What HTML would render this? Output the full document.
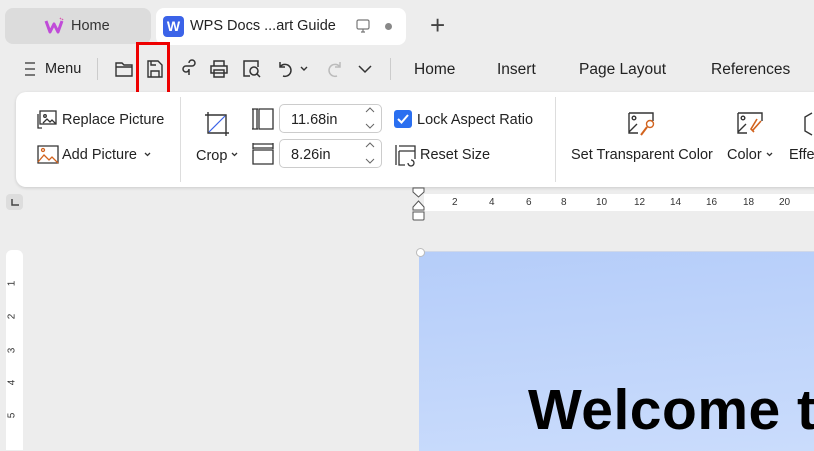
<!DOCTYPE html>
<html><head><meta charset="utf-8"><style>
*{margin:0;padding:0;box-sizing:border-box}
body{width:814px;height:446px;overflow:hidden;background:#ededed;font-family:"Liberation Sans",sans-serif;color:#222;position:relative}
.a{position:absolute;white-space:nowrap}
.t15{font-size:14.5px}
svg{position:absolute;overflow:visible}
</style></head><body>
<!-- tabs -->
<div class="a" style="left:5px;top:8px;width:146px;height:36px;background:#dcdcdc;border-radius:8px"></div>
<svg style="left:44px;top:17px" width="20" height="18" viewBox="0 0 20 18"><path d="M2 4 L6 15 L10 7 L14 15 L18 4" fill="none" stroke="#c04bd8" stroke-width="3" stroke-linejoin="round"/><path d="M16 1 l1 1 M18 3 l1 -1" stroke="#d85bb0" stroke-width="1.5"/></svg>
<div class="a t15" style="left:71px;top:18px;color:#333">Home</div>
<div class="a" style="left:156px;top:8px;width:250px;height:37px;background:#fff;border-radius:8px"></div>
<div class="a" style="left:163px;top:16px;width:21px;height:21px;background:#3b63e8;border-radius:4px;color:#fff;font-weight:bold;font-size:14px;text-align:center;line-height:21px">W</div>
<div class="a t15" style="left:190px;top:18px;color:#222">WPS Docs ...art Guide</div>
<svg style="left:356px;top:19px" width="14" height="14"><rect x="1" y="1" width="12" height="9" rx="1.5" fill="none" stroke="#777" stroke-width="1.2"/><path d="M5 13h4M7 10v3" stroke="#777" stroke-width="1.2"/></svg>
<div class="a" style="left:385px;top:23px;width:7px;height:7px;border-radius:50%;background:#888"></div>
<div class="a" style="left:430px;top:10px;font-size:26px;color:#444;font-weight:300">+</div>
<!-- toolbar -->
<svg style="left:24px;top:62px" width="12" height="14"><path d="M1 1h10M1 7h10M1 13h10" stroke="#333" stroke-width="1.3"/></svg>
<div class="a t15" style="left:45px;top:61px;color:#222">Menu</div>
<div class="a" style="left:97px;top:58px;width:1px;height:22px;background:#ccc"></div>
<svg style="left:114px;top:59px" width="20" height="20" fill="none" stroke="#333" stroke-width="1.4"><path d="M2 4h6l2 2h8v11H2z M2 8h16"/></svg>
<svg style="left:146px;top:59px" width="18" height="20" fill="none" stroke="#333" stroke-width="1.4"><path d="M2 2h10l4 4v12H2z M5 18v-6h8v6 M5 2v4h5"/></svg>
<div class="a" style="left:136px;top:42px;width:34px;height:55px;border:3.5px solid #ee0000"></div>
<svg style="left:180px;top:60px" width="18" height="18" fill="none" stroke="#333" stroke-width="1.5"><path d="M9 3a3 3 0 1 1 3 3h-6a3 3 0 1 0 3 3v6"/></svg>
<svg style="left:209px;top:59px" width="20" height="20" fill="none" stroke="#333" stroke-width="1.5"><path d="M5 7V2h10v5 M2 7h16v7H2z M5 11h10v7H5z"/></svg>
<svg style="left:242px;top:59px" width="20" height="20" fill="none" stroke="#333" stroke-width="1.5"><path d="M8 17H2V2h14v6"/><circle cx="12" cy="12" r="4"/><path d="M15 15l3 3"/></svg>
<svg style="left:277px;top:60px" width="18" height="18" fill="none" stroke="#333" stroke-width="1.5"><path d="M3 2v5h5 M3 7a6 6 0 1 1 3 9"/></svg>
<svg style="left:300px;top:66px" width="8" height="6" fill="none" stroke="#333" stroke-width="1.4"><path d="M1 1l3 3 3-3"/></svg>
<svg style="left:325px;top:60px" width="18" height="18" fill="none" stroke="#bbb" stroke-width="1.5"><path d="M15 2v5h-5 M15 7a6 6 0 1 0 -3 9"/></svg>
<svg style="left:358px;top:65px" width="14" height="9" fill="none" stroke="#333" stroke-width="1.5"><path d="M1 1l6 6 6-6"/></svg>
<div class="a" style="left:390px;top:58px;width:1px;height:22px;background:#ccc"></div>
<div class="a" style="left:414px;top:61px;font-size:15.5px">Home</div>
<div class="a" style="left:497px;top:61px;font-size:15.5px">Insert</div>
<div class="a" style="left:579px;top:61px;font-size:15.5px">Page Layout</div>
<div class="a" style="left:711px;top:61px;font-size:15.5px">References</div>
<!-- ribbon -->
<div class="a" style="left:16px;top:92px;width:830px;height:95px;background:#fff;border-radius:10px;box-shadow:0 1px 3px rgba(0,0,0,.15)"></div>
<svg style="left:37px;top:110px" width="22" height="20" fill="none" stroke="#333" stroke-width="1.3"><rect x="3" y="1" width="16" height="13"/><path d="M1 4v14h4 M6 13l4-4 3 3 2-2 4 4"/><circle cx="8" cy="6" r="1.3"/></svg>
<div class="a t15" style="left:62px;top:112px">Replace Picture</div>
<svg style="left:37px;top:145px" width="22" height="20" fill="none" stroke-width="1.3"><path d="M1 1h20v17H1z" stroke="#333"/><path d="M1 17l6-7 5 5 3-3 6 6" stroke="#d2631e"/><circle cx="6" cy="5" r="1.5" stroke="#d2631e"/></svg>
<div class="a t15" style="left:62px;top:147px">Add Picture</div>
<svg style="left:144px;top:152px" width="7" height="5" fill="none" stroke="#333" stroke-width="1.3"><path d="M1 1l2.5 2.5L6 1"/></svg>
<div class="a" style="left:180px;top:97px;width:1px;height:85px;background:#ddd"></div>
<svg style="left:204px;top:111px" width="28" height="28" fill="none" stroke="#333" stroke-width="1.4"><path d="M1 4h21v21 M4 1v21h21"/><path d="M5 21L21 5" stroke="#3b63e8" stroke-width="1.2"/></svg>
<div class="a t15" style="left:196px;top:148px">Crop</div>
<svg style="left:231px;top:152px" width="7" height="5" fill="none" stroke="#333" stroke-width="1.3"><path d="M1 1l2.5 2.5L6 1"/></svg>
<svg style="left:252px;top:108px" width="22" height="22" fill="none" stroke="#333" stroke-width="1.3"><path d="M1 1v20 M5 1v20 M7 1h14v20H7z"/><path d="M0 1h6M0 21h6"/></svg>
<svg style="left:252px;top:143px" width="22" height="22" fill="none" stroke="#333" stroke-width="1.3"><path d="M1 1h20 M1 5h20 M1 7h20v14H1z M1 0v6M21 0v6"/></svg>
<div class="a" style="left:279px;top:104px;width:103px;height:29px;border:1px solid #ccc;border-radius:5px"></div>
<div class="a t15" style="left:291px;top:112px">11.68in</div>
<div class="a" style="left:279px;top:139px;width:103px;height:29px;border:1px solid #ccc;border-radius:5px"></div>
<div class="a t15" style="left:291px;top:147px">8.26in</div>
<svg style="left:365px;top:107px" width="10" height="23" fill="none" stroke="#666" stroke-width="1"><path d="M1 5l4-4 4 4 M1 17l4 4 4-4"/></svg>
<svg style="left:365px;top:142px" width="10" height="23" fill="none" stroke="#666" stroke-width="1"><path d="M1 5l4-4 4 4 M1 17l4 4 4-4"/></svg>
<div class="a" style="left:394px;top:110px;width:18px;height:18px;background:#2a6ff0;border-radius:3px"></div>
<svg style="left:397px;top:114px" width="12" height="10" fill="none" stroke="#fff" stroke-width="2"><path d="M1 5l3.5 3.5L11 1"/></svg>
<div class="a t15" style="left:417px;top:112px">Lock Aspect Ratio</div>
<svg style="left:395px;top:144px" width="22" height="22" fill="none" stroke="#333" stroke-width="1.3"><path d="M1 1v20 M4 2h16v13 M4 7h16 M4 7v14h6 M13 19a3 3 0 1 0 3 -3"/></svg>
<div class="a t15" style="left:420px;top:147px">Reset Size</div>
<div class="a" style="left:555px;top:97px;width:1px;height:85px;background:#ddd"></div>
<svg style="left:628px;top:112px" width="28" height="24" fill="none" stroke-width="1.4"><path d="M1 1h24v8 M1 1v20h9 M1 20l8-8" stroke="#333"/><circle cx="6" cy="6" r="1.8" stroke="#333"/><circle cx="22" cy="12" r="3.5" stroke="#d2631e"/><path d="M19 15l-6 8" stroke="#d2631e" stroke-width="2"/></svg>
<div class="a t15" style="left:571px;top:147px">Set Transparent Color</div>
<svg style="left:737px;top:112px" width="28" height="24" fill="none" stroke-width="1.4"><path d="M1 1h24v8 M1 1v20h9 M1 20l8-8" stroke="#333"/><circle cx="6" cy="6" r="1.8" stroke="#333"/><path d="M24 9l-8 9 M20 7l-6 10 3 3" stroke="#d2631e" stroke-width="1.6"/></svg>
<div class="a t15" style="left:727px;top:147px">Color</div>
<svg style="left:766px;top:152px" width="7" height="5" fill="none" stroke="#333" stroke-width="1.3"><path d="M1 1l2.5 2.5L6 1"/></svg>
<svg style="left:804px;top:112px" width="14" height="24" fill="none" stroke="#333" stroke-width="1.4"><path d="M8 1L1 5v14l7 4"/></svg>
<div class="a t15" style="left:789px;top:147px">Effe</div>
<!-- rulers -->
<div class="a" style="left:6px;top:194px;width:17px;height:16px;background:#ddd;border-radius:4px"></div>
<svg style="left:11px;top:199px" width="8" height="7" fill="none" stroke="#444" stroke-width="1.5"><path d="M1 0v6h7"/></svg>
<div class="a" style="left:424px;top:194px;width:390px;height:17px;background:#fff"></div>
<svg style="left:412px;top:187px" width="14" height="36" fill="#fff" stroke="#555" stroke-width="1"><path d="M1 1h11v4l-5.5 5L1 5z M1 20l5.5-6 5.5 6v3H1z M1 25h11v7a1 1 0 0 1-1 1H2a1 1 0 0 1-1-1z"/></svg>
<div class="a" style="left:0;top:197px;font-size:10px;color:#333">
<span class="a" style="left:452px">2</span><span class="a" style="left:489px">4</span><span class="a" style="left:526px">6</span><span class="a" style="left:561px">8</span><span class="a" style="left:596px">10</span><span class="a" style="left:634px">12</span><span class="a" style="left:670px">14</span><span class="a" style="left:706px">16</span><span class="a" style="left:743px">18</span><span class="a" style="left:779px">20</span></div>
<div class="a" style="left:6px;top:250px;width:17px;height:200px;background:#fff;border-radius:6px 6px 0 0"></div>
<div class="a" style="left:9px;top:0;font-size:10px;color:#333">
<span class="a" style="top:278px;transform:rotate(-90deg)">1</span><span class="a" style="top:311px;transform:rotate(-90deg)">2</span><span class="a" style="top:345px;transform:rotate(-90deg)">3</span><span class="a" style="top:377px;transform:rotate(-90deg)">4</span><span class="a" style="top:410px;transform:rotate(-90deg)">5</span></div>
<!-- page -->
<div class="a" style="left:419px;top:251px;width:400px;height:200px;background:linear-gradient(175deg,#b5cdf9,#cadcfc);border-top:1px solid #d0d8e8"></div>
<div class="a" style="left:416px;top:248px;width:9px;height:9px;border-radius:50%;background:#fff;border:1px solid #bbb"></div>
<div class="a" style="left:528px;top:377px;font-size:57px;font-weight:bold;color:#000;letter-spacing:0.5px">Welcome t</div>
</body></html>
